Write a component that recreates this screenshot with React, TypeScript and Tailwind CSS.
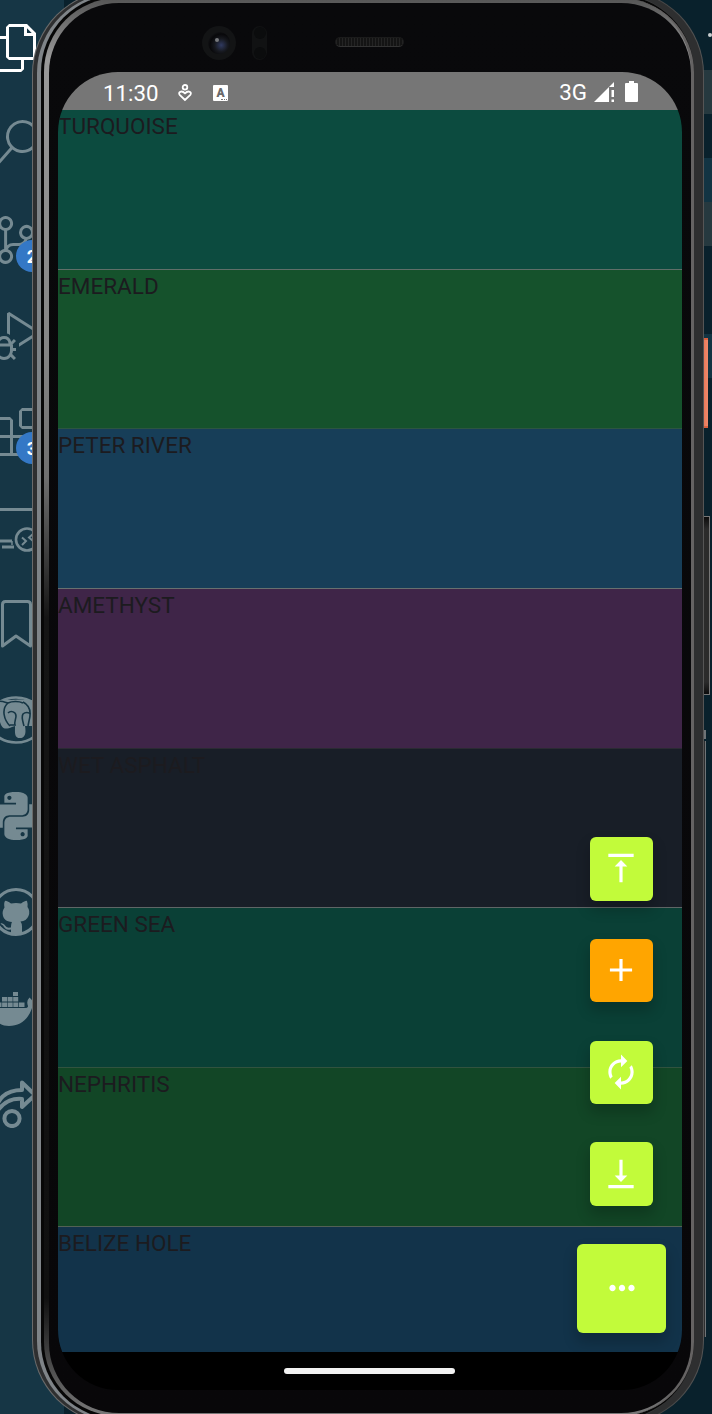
import React from "react";
import { VscFiles, VscSearch, VscSourceControl, VscDebugAlt, VscExtensions } from "react-icons/vsc";
import { SiPython } from "react-icons/si";
import { MdVerticalAlignTop, MdAdd, MdAutorenew, MdVerticalAlignBottom, MdMoreHoriz } from "react-icons/md";

type IconProps = { size?: number; className?: string };

function RemoteIcon({ size, className }: IconProps) {
  return (
    <svg width={size} height={size} viewBox="0 0 48 48" fill="none" stroke="currentColor" strokeWidth="3" className={className}>
      <path d="M0 5.500h46v16M0 5.500v31.500h20M10 43h12" />
      <path d="M20 37v4" strokeWidth="1.500" />
      <circle cx="35" cy="35.500" r="11" strokeWidth="2.600" />
      <path d="m30 33.500 4 3.500-4 4M41 30l-4 3.500 4 3.500" strokeWidth="2" />
    </svg>
  );
}

function BookmarkIcon({ size, className }: IconProps) {
  return (
    <svg width={size} height={size} viewBox="0 0 48 48" fill="none" stroke="currentColor" strokeWidth="3" strokeLinejoin="round" className={className}>
      <path d="M10.500 46V4.500q0-3 3-3h22q3 0 3 3V46L24 36z" />
    </svg>
  );
}

function ElephantIcon({ size, className }: IconProps) {
  return (
    <svg width={size} height={size} viewBox="0 0 48 48" className={className}>
      <ellipse cx="24" cy="24" rx="27" ry="22.500" fill="none" stroke="currentColor" strokeWidth="2.600" />
      <path fill="currentColor" d="M1 8c5-4 11-5 15-4 5 0 11-1 16 0 6-1 12 0 17 5 1 8-3 15-8 21h-8c1 5 1 12-5 12s-5-6-5-12l-3 1c-7 3-10 2-12-5C4 20 1 14 1 8z" />
      <g fill="none" stroke="#163645" strokeWidth="1.600">
        <path d="M2 6c6-2 10 0 14 1C9 13 12 24 18 30M16 7c4-2 11-2 15 0M31 6c8 4 8 12 6 19l-1 5" />
        <path d="M16 17c3-3 8-1 8 3 0 3-2 6-1 9h-5M32 30c-1-4-3-9-1-12 2-2 6-2 7 0" />
      </g>
    </svg>
  );
}

function OctocatIcon({ size, className }: IconProps) {
  return (
    <svg width={size} height={size} viewBox="0 0 48 48" className={className}>
      <circle cx="24" cy="24" r="22.500" fill="none" stroke="currentColor" strokeWidth="3" />
      <path fill="currentColor" d="M13 13q1-1 6 2.500 5-1 10 0 5-3.500 6-2.500 1 3 .5 6 3 4 1 9-2 5-8 5.500 1.500 2 1.500 5v8H19v-5c-5 1-6-1-8-4-1-1-2-1-2.500-2 3-1 4 2 6 3.500 2 1 3 .5 4.500.5 0-3 .5-4.500 1-5.500-6-.5-8-3-9-6-1-4 0-6 1.500-8.500-.5-3-.5-5 .5-6.500z" />
    </svg>
  );
}

function WhaleIcon({ size, className }: IconProps) {
  return (
    <svg width={size} height={size} viewBox="0 0 48 48" fill="currentColor" className={className}>
      <path d="M21 8h5v4h-5zM10 13h5v4.500h-5zM15.600 13h5v4.500h-5zM21.200 13h5v4.500h-5zM4 18.500h5.500V23H4zM10.100 18.500h5V23h-5zM15.700 18.500h5V23h-5zM21.300 18.500h5V23h-5zM27 18.500h5.500V23H27z" />
      <path d="M0 24h33q3 0 3-2-2-5 1.500-8.500 3 2 3.500 6 4-1 6 .5-2 4-7 4C36 36 28 42 17 42 6 42 0 34 0 24z" />
    </svg>
  );
}

function ShareIcon({ size, className }: IconProps) {
  return (
    <svg width={size} height={size} viewBox="0 0 48 48" fill="none" stroke="currentColor" strokeWidth="4" strokeLinejoin="round" className={className}>
      <path d="M30 2.500 43 15 30 27v-8C19 18 11 22 4 33 4 19 14 10 30 10z" />
      <circle cx="20" cy="38.500" r="7.600" />
    </svg>
  );
}

type Tool = { Icon: React.ComponentType<IconProps>; tone?: string; badge?: string };

const tools: Tool[] = [
  { Icon: VscFiles, tone: "text-white" },
  { Icon: VscSearch },
  { Icon: VscSourceControl, badge: "2" },
  { Icon: VscDebugAlt },
  { Icon: VscExtensions, badge: "3" },
  { Icon: RemoteIcon },
  { Icon: BookmarkIcon },
  { Icon: ElephantIcon },
  { Icon: SiPython },
  { Icon: OctocatIcon },
  { Icon: WhaleIcon },
  { Icon: ShareIcon },
];

const rows = [
  { name: "TURQUOISE", cls: "h-[160px] bg-[#0c4b3f] border-[#5f6f69]" },
  { name: "EMERALD", cls: "h-[159px] bg-[#15522c] border-[#2c5541]" },
  { name: "PETER RIVER", cls: "h-[160px] bg-[#173e58] border-[#67706f]" },
  { name: "AMETHYST", cls: "h-[160px] bg-[#3f2548] border-[#2b2b33]" },
  { name: "WET ASPHALT", cls: "h-[159px] bg-[#181e27] border-[#5f6666]" },
  { name: "GREEN SEA", cls: "h-[160px] bg-[#0a4036] border-[#31533f]" },
  { name: "NEPHRITIS", cls: "h-[159px] bg-[#124626] border-[#526154]" },
  { name: "BELIZE HOLE", cls: "h-[126px] bg-[#12334a] border-[#12334a]" },
];

const actions = [
  { Icon: MdVerticalAlignTop, tone: "bg-[#c2fb3a]" },
  { Icon: MdAdd, tone: "bg-[#ffa500]" },
  { Icon: MdAutorenew, tone: "bg-[#c2fb3a]" },
  { Icon: MdVerticalAlignBottom, tone: "bg-[#c2fb3a]" },
];

function ActivityBar() {
  return (
    <nav className="-ml-8 w-24 shrink-0 bg-[#163645] flex flex-col">
      {tools.map(({ Icon, tone, badge }, i) => (
        <div key={i} className="relative h-24 shrink-0 flex items-center justify-center">
          <Icon size={48} className={tone ?? "text-[#758a92]"} />
          {badge && (
            <span className="absolute left-12 top-12 size-8 rounded-full bg-[#3478c6] text-white text-[18px] font-bold flex items-center justify-center">
              {badge}
            </span>
          )}
        </div>
      ))}
    </nav>
  );
}

function EditorEdge() {
  return (
    <div className="w-[9px] shrink-0 flex flex-col items-start">
      <div className="h-[70px] w-full flex justify-end pt-[33px]"><i className="size-[4px] rounded-full bg-[#c9ced0]" /></div>
      <div className="h-[44px] w-full bg-[#26393f]" />
      <div className="h-[44px]" />
      <div className="h-[44px] w-full bg-[#123443]" />
      <div className="h-[44px] w-full bg-[#26393f]" />
      <div className="h-[88px]" />
      <div className="h-[44px] w-full bg-[#123443] pt-1">
        <div className="w-[5px] h-[90px] bg-linear-to-r from-[#e87555] to-[#f08a6c] border-y-2 border-[#d9603f]" />
      </div>
      <div className="mt-[138px] w-[7px] h-[179px] bg-[linear-gradient(to_bottom,#0c0c0c,#2b2b2b_12px,#2b2b2b_165px,#0c0c0c)] border-y border-r border-[#777]" />
      <div className="mt-[35px] w-[3px] h-[9px] bg-[#6f7477]" />
      <div className="mt-[2px] w-[3px] h-[596px] bg-[#2c2d2e] border-r border-[#6f7477]" />
    </div>
  );
}

function StatusBar() {
  return (
    <header className="h-[38px] shrink-0 bg-[#767676] text-white flex items-center pl-[45px] pr-[44px] pt-[3px]">
      <span className="text-[22.3px] leading-none w-[74px] pt-[2px]">11:30</span>
      <svg width="16" height="18" viewBox="0 0 16 18" fill="none" stroke="currentColor" strokeWidth="1.8">
        <circle cx="8" cy="3.300" r="2.300" />
        <path d="M8 16 2.700 10.800C.6 8.300 4.500 5.800 8 9.300c3.500-3.500 7.400-1 5.300 1.500z" />
      </svg>
      <span className="ml-[20px] relative w-[15px] h-[16px] rounded-[1px] bg-white text-[#6a6a6a] text-[12px] leading-[16px] font-black text-center">
        A<i className="absolute right-px bottom-px w-[6px] border-b border-dotted border-[#767676]" />
      </span>
      <span className="ml-auto text-[22.4px] leading-none">3G</span>
      <svg className="ml-[7px] -mt-[1px]" width="21" height="20" viewBox="0 0 21 20" fill="currentColor">
        <path d="M0 20 20 0v5h-5v15zM17.500 8H20v7h-2.500zM17.500 17.500H20V20h-2.500z" />
      </svg>
      <svg className="ml-[10px] -mt-[3px]" width="13" height="21" viewBox="0 0 13 21" fill="currentColor">
        <path d="M4 0h5v2h3q1 0 1 1v17q0 1-1 1H1q-1 0-1-1V3q0-1 1-1h3z" />
      </svg>
    </header>
  );
}

function Screen() {
  return (
    <div className="relative w-[624px] h-[1318px] rounded-[60px] overflow-hidden bg-black flex flex-col">
      <StatusBar />
      <main className="h-[1242px] overflow-hidden text-[#1c1b1f]">
        {rows.map((r) => (
          <div key={r.name} className={`${r.cls} border-b text-[22.5px] leading-[33px]`}>{r.name}</div>
        ))}
      </main>
      <div className="flex-1 flex items-center justify-center pr-[1px]">
        <div className="w-[171px] h-[6px] rounded-full bg-[#f2f2f2]" />
      </div>
      <div className="absolute right-[16px] bottom-[57px] flex flex-col items-center gap-[38.3px] text-white">
        {actions.map(({ Icon, tone }, i) => (
          <button key={i} className={`${tone} mr-[0.5px] w-[63.5px] h-[63.4px] rounded-[6px] flex items-center justify-center shadow-[0_8px_14px_1px_rgba(0,0,0,0.2)]`}>
            <Icon size={38} className="-mt-px" />
          </button>
        ))}
        <button className="size-[89px] rounded-[6px] bg-[#c2fb3a] flex items-center justify-center shadow-[0_8px_14px_1px_rgba(0,0,0,0.2)]">
          <MdMoreHoriz size={38} className="-mt-px" />
        </button>
      </div>
    </div>
  );
}

function Bezel() {
  return (
    <div className="h-[69px] shrink-0 flex items-start">
      <div className="ml-[144px] mt-[23px] size-[34px] rounded-full bg-[#131415] flex items-center justify-center">
        <div className="size-[22px] rounded-full bg-[radial-gradient(circle_at_60%_60%,#303a60_0,#17191f_35%,#08080a_60%,#25272a_100%)] pl-[7px] pt-[6px]">
          <div className="size-[4px] rounded-full bg-[#77797d]" />
        </div>
      </div>
      <div className="ml-[16px] mt-[23px] w-[15px] h-[34px] rounded-full bg-[#111213] flex flex-col items-center justify-between p-[1px]">
        <i className="size-[12px] rounded-full bg-[#0b0c0d]" />
        <i className="size-[12px] rounded-full bg-[#0b0c0d]" />
      </div>
      <div className="ml-[68px] mt-[34px] w-[69px] h-[10px] rounded-full border border-[#1b1b1b] border-b-[#333] bg-[repeating-linear-gradient(90deg,#242424_0_1px,#141414_1px_3px)]" />
    </div>
  );
}

function Phone() {
  return (
    <div className="relative z-10 [grid-area:1/1] -mt-[10px] ml-[32px] w-[672px] h-[1434px] rounded-[84px] bg-[linear-gradient(to_right,#6b6b6b_0,#6b6b6b_80px,#3c3c3c_600px,#555_100%)] p-px">
      <div className="h-full rounded-[83px] bg-[#2e2f30] pl-[4px] pr-[9px] py-[2px]">
        <div className="h-full rounded-[80px] bg-[linear-gradient(to_right,#7f8488_0,#7f8488_80px,#3a3b3c_600px)] pl-[4px] py-[2px]">
          <div className="h-full rounded-[77px] bg-[#070707] pl-[3px] py-[3px]">
            <div className="h-full rounded-[74px] border-r-[3px] border-[#656363] bg-[linear-gradient(to_bottom,#555_0,#999_60px,#858585_350px,#6f6f6f_480px,#151515_620px,#101010_1300px,#777_1416px)] pl-[5px] pt-[5px] pb-[3px]">
              <div className="h-full rounded-[70px] bg-linear-to-b from-[#09090b] to-[#080709] pl-[9px] flex flex-col">
                <Bezel />
                <Screen />
              </div>
            </div>
          </div>
        </div>
      </div>
    </div>
  );
}

export default function App() {
  return (
    <div className="w-[712px] h-[1414px] overflow-hidden grid grid-cols-[712px] grid-rows-[1414px] bg-[#09212c] font-[Roboto,sans-serif]">
      <div className="[grid-area:1/1] flex justify-between overflow-hidden">
        <ActivityBar />
        <EditorEdge />
      </div>
      <Phone />
    </div>
  );
}
